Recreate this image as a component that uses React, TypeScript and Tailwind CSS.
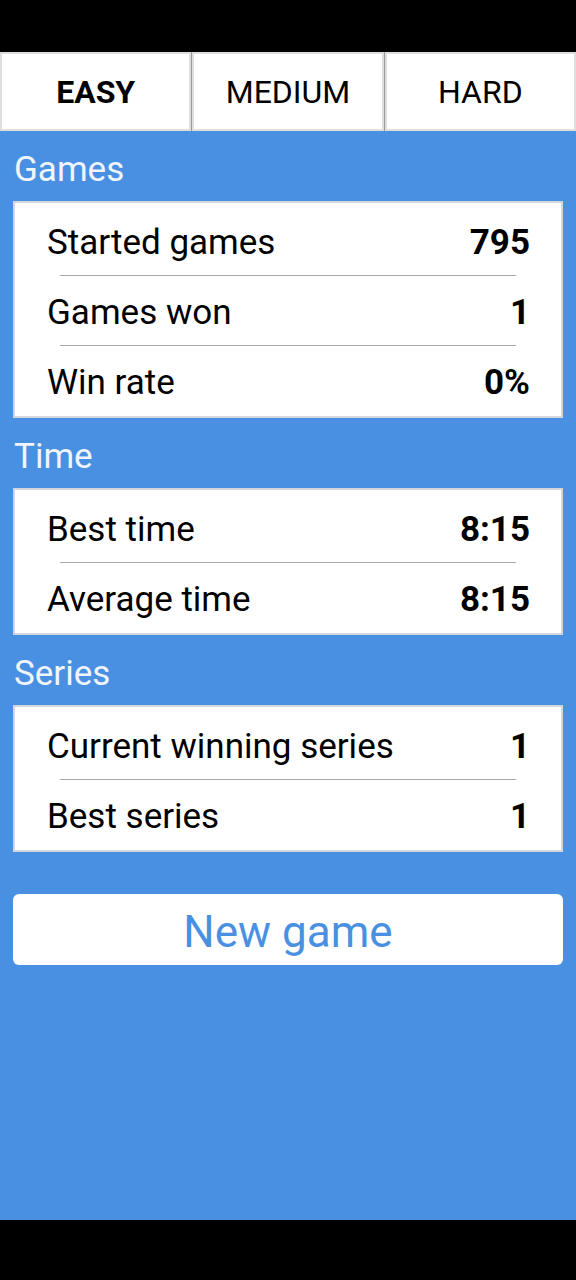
import React, { useState } from "react";

type Row = { label: string; value: string };

const sections: { title: string; rows: Row[] }[] = [
  {
    title: "Games",
    rows: [
      { label: "Started games", value: "795" },
      { label: "Games won", value: "1" },
      { label: "Win rate", value: "0%" },
    ],
  },
  {
    title: "Time",
    rows: [
      { label: "Best time", value: "8:15" },
      { label: "Average time", value: "8:15" },
    ],
  },
  {
    title: "Series",
    rows: [
      { label: "Current winning series", value: "1" },
      { label: "Best series", value: "1" },
    ],
  },
];

const tabs = ["EASY", "MEDIUM", "HARD"];

const StatsCard = ({ rows }: { rows: Row[] }) => (
  <div className="mx-[13px] border-2 border-[#d3d6dc] bg-white pt-[3px] pb-[1px]">
    {rows.map((row, i) => (
      <div key={row.label}>
        {i > 0 && <div className="mx-[45px] h-px bg-[#a9a9a9]" />}
        <div className="flex h-[69px] items-center justify-between pt-[4px] pl-[32px] pr-[31px] text-[35px] leading-[40px] text-black">
          <span>{row.label}</span>
          <span className="font-bold">{row.value}</span>
        </div>
      </div>
    ))}
  </div>
);

const App = () => {
  const [level, setLevel] = useState("EASY");

  return (
    <div className="flex h-[1280px] w-[576px] flex-col bg-black font-['Roboto',sans-serif]">
      <div className="h-[52px] shrink-0" />

      {/* Difficulty tabs */}
      <div className="grid h-[79px] shrink-0 grid-cols-3 gap-[1px] bg-[#9a9a9a]">
        {tabs.map((tab) => (
          <button
            key={tab}
            onClick={() => setLevel(tab)}
            className={
              "border-2 border-[#dedede] bg-white text-[32px] text-black " +
              (level === tab ? "font-bold" : "font-normal")
            }
          >
            {tab}
          </button>
        ))}
      </div>

      <div className="flex-1 bg-[#4a90e2]">
        {sections.map((section) => (
          <div key={section.title}>
            <h2 className="h-[70px] pl-[14px] pt-[19px] text-[35px] leading-[40px] text-[#f0f4fb]">
              {section.title}
            </h2>
            <StatsCard rows={section.rows} />
          </div>
        ))}

        <div className="px-[13px] pt-[42px]">
          <button className="flex h-[71px] w-full items-center justify-center rounded-[6px] bg-white pt-[5px] text-[44px] leading-[50px] text-[#4a90e2]">
            New game
          </button>
        </div>
      </div>

      <div className="h-[60px] shrink-0" />
    </div>
  );
};

export default App;
